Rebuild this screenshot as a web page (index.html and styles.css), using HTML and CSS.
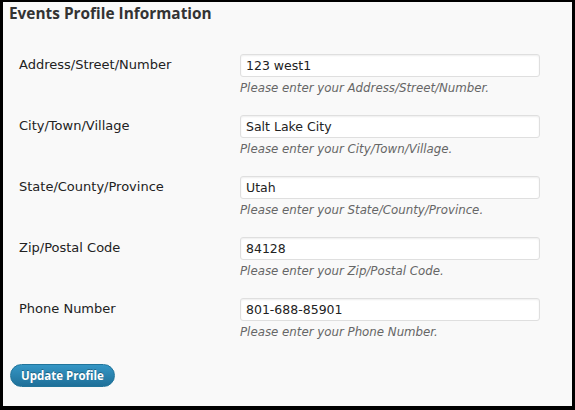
FILE: index.html
```html
<!DOCTYPE html>
<html>
<head>
<meta charset="utf-8">
<link rel="stylesheet" href="styles.css">
</head>
<body>
<div class="panel">
  <h3 class="title">Events Profile Information</h3>
  <form class="form">
    <div class="row">
      <label class="label">Address/Street/Number</label>
      <div class="field">
        <input class="input" type="text" value="123 west1">
        <p class="desc">Please enter your Address/Street/Number.</p>
      </div>
    </div>
    <div class="row">
      <label class="label">City/Town/Village</label>
      <div class="field">
        <input class="input" type="text" value="Salt Lake City">
        <p class="desc">Please enter your City/Town/Village.</p>
      </div>
    </div>
    <div class="row">
      <label class="label">State/County/Province</label>
      <div class="field">
        <input class="input" type="text" value="Utah">
        <p class="desc">Please enter your State/County/Province.</p>
      </div>
    </div>
    <div class="row">
      <label class="label">Zip/Postal Code</label>
      <div class="field">
        <input class="input" type="text" value="84128">
        <p class="desc">Please enter your Zip/Postal Code.</p>
      </div>
    </div>
    <div class="row">
      <label class="label">Phone Number</label>
      <div class="field">
        <input class="input" type="text" value="801-688-85901">
        <p class="desc">Please enter your Phone Number.</p>
      </div>
    </div>
    <div class="actions">
      <button class="button" type="button">Update Profile</button>
    </div>
  </form>
</div>
</body>
</html>
```
FILE: styles.css
```css
html, body {
  margin: 0;
  padding: 0;
  background: #000;
  width: 575px;
  height: 410px;
  overflow: hidden;
}
.panel {
  margin: 2px 3px 0 3px;
  height: 404px;
  background: #f9f9f9;
  box-sizing: border-box;
  padding: 1px 0 0 0;
  font-family: "DejaVu Sans", sans-serif;
  color: #222;
}
.title {
  margin: 0;
  padding-left: 6px;
  font-family: "Open Sans", sans-serif;
  font-size: 15.4px;
  font-weight: bold;
  line-height: 22px;
  color: #333;
}
.form {
  margin: 0;
  padding: 29px 0 0 16px;
}
.row {
  display: grid;
  grid-template-columns: 221px 300px;
  height: 61px;
}
.label {
  font-size: 13px;
  line-height: 16px;
  padding-top: 3px;
  color: #222;
}
.field {
  display: flex;
  flex-direction: column;
}
.input {
  box-sizing: border-box;
  width: 300px;
  height: 23px;
  margin: 0;
  padding: 0 5px;
  border: 1px solid #dfdfdf;
  border-radius: 3px;
  background: #fff;
  font-family: "DejaVu Sans", sans-serif;
  font-size: 12.5px;
  color: #222;
  box-shadow: inset 0 1px 2px rgba(0,0,0,0.07);
}
.desc {
  margin: 3px 0 0 0;
  font-size: 11.8px;
  line-height: 16px;
  font-style: italic;
  color: #666;
}
.actions {
  padding: 5px 0 0 0;
  margin-left: -9px;
}
.button {
  height: 23px;
  width: 105px;
  padding: 0;
  border: 1px solid #21759b;
  border-radius: 12px;
  background: linear-gradient(to bottom, #3596c5, #1f7099);
  color: #fff;
  font-family: "Open Sans", sans-serif;
  font-size: 11.5px;
  font-weight: bold;
  text-shadow: 0 -1px 0 rgba(0,0,0,0.3);
}
```
